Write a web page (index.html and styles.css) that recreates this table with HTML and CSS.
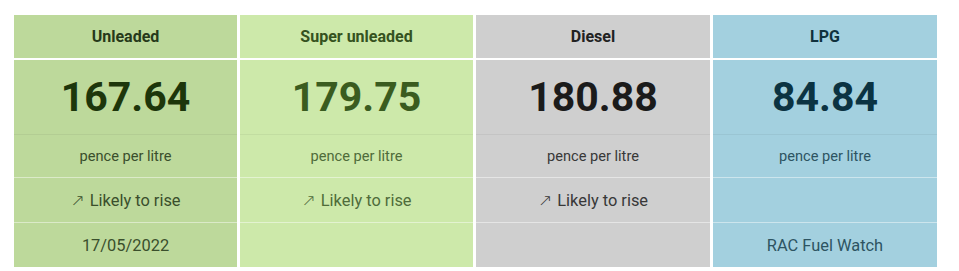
FILE: index.html
```html
<!DOCTYPE html>
<html lang="en">
<head>
<meta charset="utf-8">
<title>Fuel prices</title>
<link rel="stylesheet" href="styles.css">
</head>
<body>
<div class="board">
  <div class="col unleaded">
    <div class="cell head">Unleaded</div>
    <div class="cell price">167.64</div>
    <div class="cell unit">pence per litre</div>
    <div class="cell trend"><span class="arrow">↗</span> Likely to rise</div>
    <div class="cell foot">17/05/2022</div>
  </div>
  <div class="col super">
    <div class="cell head">Super unleaded</div>
    <div class="cell price">179.75</div>
    <div class="cell unit">pence per litre</div>
    <div class="cell trend"><span class="arrow">↗</span> Likely to rise</div>
    <div class="cell foot"></div>
  </div>
  <div class="col diesel">
    <div class="cell head">Diesel</div>
    <div class="cell price">180.88</div>
    <div class="cell unit">pence per litre</div>
    <div class="cell trend"><span class="arrow">↗</span> Likely to rise</div>
    <div class="cell foot"></div>
  </div>
  <div class="col lpg">
    <div class="cell head">LPG</div>
    <div class="cell price">84.84</div>
    <div class="cell unit">pence per litre</div>
    <div class="cell trend"></div>
    <div class="cell foot">RAC Fuel Watch</div>
  </div>
</div>
</body>
</html>
```
FILE: styles.css
```css
* { box-sizing: border-box; }
html, body { margin: 0; padding: 0; background: #fff; }
body {
  font-family: Roboto, "Liberation Sans", Arial, sans-serif;
  padding: 15px 0 0 14px;
}
.board {
  display: grid;
  grid-template-columns: 223px 233px 234px 224px;
  column-gap: 3px;
  width: 923px;
}
.col { display: flex; flex-direction: column; }
.cell {
  display: flex;
  align-items: center;
  justify-content: center;
  text-align: center;
  white-space: pre;
}
.head {
  height: 45px;
  padding-bottom: 1px;
  border-bottom: 2px solid #fff;
  font-size: 16px;
  font-weight: 700;
}
.price {
  height: 75px;
  border-bottom: 1px solid rgba(0,0,0,0.05);
  font-size: 41px;
  font-weight: 700;
}
.unit {
  height: 43px;
  border-bottom: 1px solid rgba(255,255,255,0.45);
  font-size: 14.6px;
}
.trend {
  height: 45px;
  border-bottom: 1px solid rgba(255,255,255,0.45);
  font-size: 16.4px;
}
.foot {
  height: 44px;
  font-size: 16.4px;
}
.arrow {
  font-family: "DejaVu Sans", sans-serif;
  font-size: 17px;
  font-weight: 300;
  margin-right: 1px;
}

.unleaded { background: #bdd99b; }
.unleaded .head { color: #26391a; }
.unleaded .price { color: #1d360b; }
.unleaded .unit, .unleaded .trend, .unleaded .foot { color: #3a4f2c; }

.super { background: #cde9aa; }
.super .head { color: #355220; }
.super .price { color: #3a5c1f; }
.super .unit, .super .trend, .super .foot { color: #4f6c3a; }

.diesel { background: #cfcfcf; }
.diesel .head { color: #222; }
.diesel .price { color: #1b1b1b; }
.diesel .unit, .diesel .trend, .diesel .foot { color: #383838; }

.lpg { background: #a3d0df; }
.lpg .head { color: #10313d; }
.lpg .price { color: #0b3342; }
.lpg .unit, .lpg .trend, .lpg .foot { color: #2d5462; }
```
